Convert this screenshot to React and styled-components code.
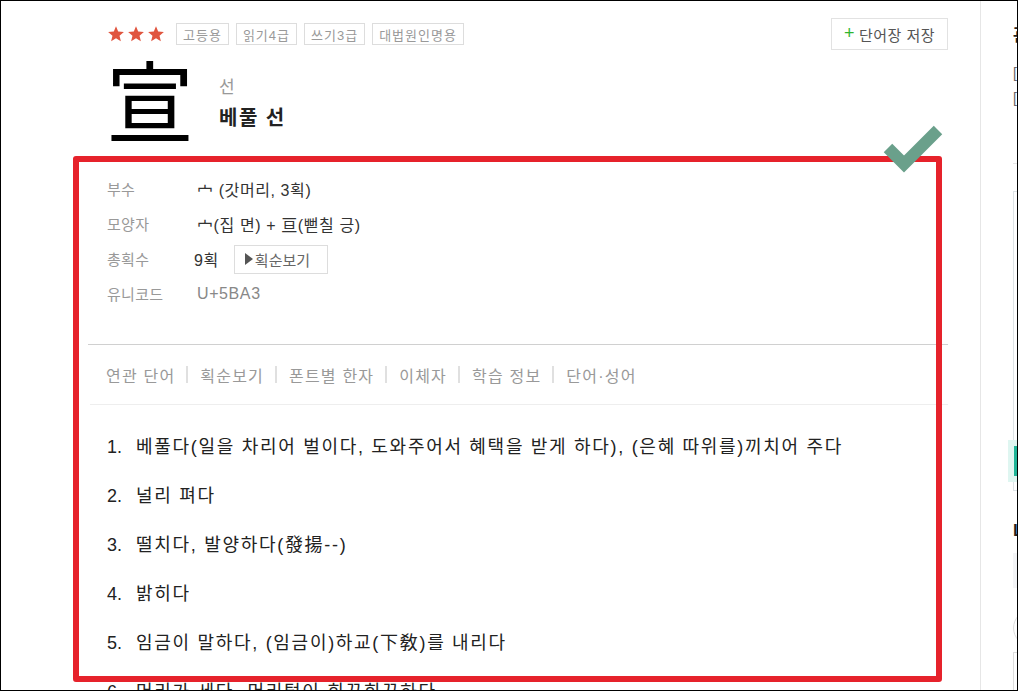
import React from "react";
import styled, { createGlobalStyle } from "styled-components";

const GlobalStyle = createGlobalStyle`
  html, body { margin: 0; padding: 0; background: #fff; }
  body { font-family: "Liberation Sans", "Noto Sans CJK KR", sans-serif; }
  * { box-sizing: border-box; }
`;

const Frame = styled.div`
  position: relative;
  width: 1018px;
  height: 691px;
  border: 1px solid #000;
  overflow: hidden;
  display: flex;
  background: #fff;
`;

const Main = styled.main`
  width: 860px;
  flex-shrink: 0;
  margin-left: 87px;
  padding-top: 17px;
`;

const TopRow = styled.div`
  display: flex;
  align-items: center;
  height: 32px;
  padding-left: 19px;
`;

const Stars = styled.div`
  display: flex;
  gap: 2px;
  margin-right: 11px;
`;

const Tag = styled.span`
  display: inline-flex;
  align-items: center;
  height: 22px;
  padding: 0 6px;
  margin-right: 7px;
  border: 1px solid #ddd;
  font-size: 13px;
  color: #999;
  letter-spacing: 1px;
`;

const SaveButton = styled.button`
  margin-left: auto;
  height: 32px;
  width: 117px;
  border: 1px solid #e2e2e2;
  background: #fff;
  font-family: inherit;
  font-size: 15px;
  color: #555;
  display: flex;
  align-items: center;
  justify-content: center;
  gap: 4px;
  padding: 0;
  letter-spacing: 0.5px;
`;

const Plus = styled.span`
  color: #2fb52f;
  font-size: 18px;
  line-height: 1;
  margin-top: -2px;
`;

const Header = styled.div`
  display: flex;
  align-items: flex-start;
  margin-top: 3px;
  padding-left: 18px;
`;

const BigChar = styled.div`
  font-family: "Noto Sans CJK KR", sans-serif;
  font-size: 88px;
  line-height: 88px;
  color: #000;
  width: 88px;
`;

const Reading = styled.div`
  margin-left: 25px;
  padding-top: 22px;
`;

const Sound = styled.div`
  font-size: 17px;
  color: #999;
  line-height: 26px;
`;

const Meaning = styled.div`
  font-size: 20px;
  font-weight: 700;
  color: #222;
  line-height: 30px;
  margin-top: 2px;
  letter-spacing: 1.5px;
`;

const InfoList = styled.dl`
  margin: 30px 0 0;
  padding: 0 0 33px 19px;
`;

const InfoRow = styled.div`
  display: flex;
  align-items: center;
  height: 35px;
`;

const Label = styled.dt`
  width: 90px;
  font-size: 15px;
  color: #999;
  letter-spacing: 0.3px;
`;

const Value = styled.dd`
  margin: 0 0 0 ${(p) => p.$shift || 0}px;
  font-size: 16px;
  color: ${(p) => (p.$muted ? "#888" : "#333")};
  display: flex;
  align-items: center;
  letter-spacing: 0.6px;
`;

const StrokeButton = styled.button`
  margin-left: 15px;
  margin-top: 1px;
  height: 29px;
  width: 94px;
  border: 1px solid #ddd;
  background: #fff;
  font-family: inherit;
  font-size: 15px;
  color: #666;
  display: flex;
  align-items: center;
  gap: 2px;
  padding: 0 0 0 10px;
`;

const Triangle = styled.span`
  width: 0;
  height: 0;
  border-left: 8px solid #555;
  border-top: 6px solid transparent;
  border-bottom: 6px solid transparent;
`;

const Divider = styled.hr`
  margin: 0 0 0 ${(p) => p.$inset || 0}px;
  border: 0;
  border-top: 1px solid ${(p) => p.$color};
`;

const Tabs = styled.nav`
  display: flex;
  align-items: center;
  height: 59px;
  padding-left: 18px;
`;

const TabItem = styled.span`
  font-size: 16px;
  color: #999;
  letter-spacing: 1.2px;
`;

const TabBar = styled.span`
  width: 2px;
  height: 17px;
  background: #e0e0e0;
  margin: 0 12px 0 11px;
`;

const Meanings = styled.ol`
  list-style: none;
  margin: 0;
  padding: 18px 0 0 19px;
`;

const MeaningItem = styled.li`
  height: 49px;
  line-height: 49px;
  font-size: 18px;
  color: #222;
  letter-spacing: 1.7px;
  white-space: nowrap;
`;

const Num = styled.span`
  display: inline-block;
  width: 29px;
  letter-spacing: 0;
`;

const Sidebar = styled.aside`
  margin-left: 32px;
  border-left: 1px solid #e6e6e6;
  padding: 20px 0 0 32px;
  width: 300px;
  flex-shrink: 0;
`;

const SideTitle = styled.div`
  font-size: 17px;
  font-weight: 700;
  color: #222;
  height: 20px;
  margin-top: ${(p) => p.$top || 0}px;
  margin-bottom: ${(p) => p.$gap || 0}px;
`;

const SideLine = styled.div`
  font-size: 14px;
  color: #666;
  line-height: 25px;
`;

const SideRule = styled.div`
  margin-top: 52px;
  border-top: 1px solid #e6e6e6;
`;

const SideBox = styled.div`
  margin-top: 27px;
  height: 300px;
  border: 1px solid #dde3e6;
  display: flex;
  flex-direction: column;
  justify-content: flex-end;
  padding-bottom: 14px;
`;

const TealBar = styled.div`
  height: 30px;
  background: #1fb597;
  box-shadow: 0 0 0 6px #dff6f1;
`;

const SideGray = styled.div`
  height: 35px;
  background: #f3f4f6;
  margin-bottom: 22px;
`;

const SideCircle = styled.div`
  width: 36px;
  height: 36px;
  border-radius: 50%;
  border: 1px solid #ddd;
  margin-bottom: 6px;
`;

const SideCard = styled.div`
  height: 80px;
  border: 1px solid #ddd;
`;

const RedBox = styled.div`
  position: absolute;
  left: 72px;
  top: 155px;
  width: 869px;
  height: 526px;
  border: 6px solid #e6222b;
  border-radius: 3px;
  pointer-events: none;
`;

const Check = styled.svg`
  position: absolute;
  left: 876px;
  top: 118px;
`;

const Star = () => (
  <svg width="18" height="18" viewBox="0 0 24 24">
    <polygon
      points="12,1.5 14.9,8.6 22.5,9.2 16.7,14.2 18.5,21.7 12,17.6 5.5,21.7 7.3,14.2 1.5,9.2 9.1,8.6"
      fill="#e0553f"
    />
  </svg>
);

const info = [
  { label: "부수", value: "宀 (갓머리, 3획)" },
  { label: "모양자", value: "宀(집 면) + 亘(뻗칠 긍)" },
  { label: "총획수", value: "9획", shift: -3, button: true },
  { label: "유니코드", value: "U+5BA3", muted: true },
];

const tabs = ["연관 단어", "획순보기", "폰트별 한자", "이체자", "학습 정보", "단어·성어"];

const meanings = [
  "베풀다(일을 차리어 벌이다, 도와주어서 혜택을 받게 하다), (은혜 따위를)끼치어 주다",
  "널리 펴다",
  "떨치다, 발양하다(發揚--)",
  "밝히다",
  "임금이 말하다, (임금이)하교(下敎)를 내리다",
  "머리가 세다, 머리털이 희끗희끗하다",
];

export default function App() {
  return (
    <Frame>
      <GlobalStyle />
      <Main>
        <TopRow>
          <Stars>
            <Star />
            <Star />
            <Star />
          </Stars>
          <Tag>고등용</Tag>
          <Tag>읽기4급</Tag>
          <Tag>쓰기3급</Tag>
          <Tag>대법원인명용</Tag>
          <SaveButton>
            <Plus>+</Plus>단어장 저장
          </SaveButton>
        </TopRow>

        <Header>
          <BigChar>宣</BigChar>
          <Reading>
            <Sound>선</Sound>
            <Meaning>베풀 선</Meaning>
          </Reading>
        </Header>

        <InfoList>
          {info.map((row) => (
            <InfoRow key={row.label}>
              <Label>{row.label}</Label>
              <Value $muted={row.muted} $shift={row.shift}>
                {row.value}
                {row.button && (
                  <StrokeButton>
                    <Triangle />
                    획순보기
                  </StrokeButton>
                )}
              </Value>
            </InfoRow>
          ))}
        </InfoList>

        <Divider $color="#d0d0d0" />
        <Tabs>
          {tabs.map((t, i) => (
            <React.Fragment key={t}>
              {i > 0 && <TabBar />}
              <TabItem>{t}</TabItem>
            </React.Fragment>
          ))}
        </Tabs>
        <Divider $color="#eeeeee" $inset={2} />

        <Meanings>
          {meanings.map((m, i) => (
            <MeaningItem key={i}>
              <Num>{i + 1}.</Num>
              {m}
            </MeaningItem>
          ))}
        </Meanings>
      </Main>

      <Sidebar>
        <SideTitle $gap={20}>관련 한자</SideTitle>
        <SideLine>[宣] 宣布</SideLine>
        <SideLine>[宣] 宣言</SideLine>
        <SideRule />
        <SideBox>
          <TealBar />
        </SideBox>
        <SideTitle $top={30} $gap={12}>Learn</SideTitle>
        <SideGray />
        <SideCircle />
        <SideCard />
      </Sidebar>

      <RedBox />
      <Check width="70" height="60" viewBox="0 0 70 60">
        <polyline
          points="11,29 27,45 61,11"
          fill="none"
          stroke="#6aa08b"
          strokeWidth="12"
        />
      </Check>
    </Frame>
  );
}
